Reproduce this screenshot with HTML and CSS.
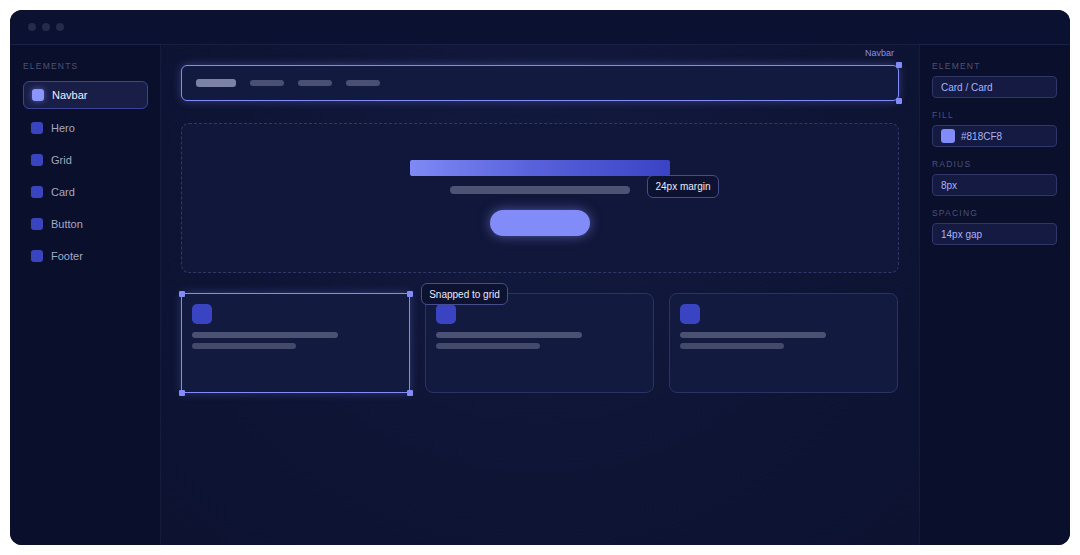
FILE: index.html
```html
<!DOCTYPE html>
<html>
<head>
<meta charset="utf-8">
<link rel="stylesheet" href="styles.css">
</head>
<body>
<div class="window">
  <div class="titlebar">
    <span class="dot"></span><span class="dot"></span><span class="dot"></span>
  </div>
  <div class="main">
    <aside class="sidebar">
      <div class="label">ELEMENTS</div>
      <ul class="layers">
        <li class="layer active"><span class="sq"></span>Navbar</li>
        <li class="layer"><span class="sq"></span>Hero</li>
        <li class="layer"><span class="sq"></span>Grid</li>
        <li class="layer"><span class="sq"></span>Card</li>
        <li class="layer"><span class="sq"></span>Button</li>
        <li class="layer"><span class="sq"></span>Footer</li>
      </ul>
    </aside>
    <section class="canvas">
      <div class="navbar">
        <span class="tag">Navbar</span>
        <span class="nb logo"></span>
        <span class="nb"></span>
        <span class="nb"></span>
        <span class="nb"></span>
        <span class="handle h-tr"></span>
        <span class="handle h-br"></span>
      </div>
      <div class="hero">
        <div class="hero-title"></div>
        <div class="hero-sub"></div>
        <div class="hero-btn"></div>
        <div class="tip tip-margin">24px margin</div>
      </div>
      <div class="cards">
        <div class="card selected">
          <div class="card-icon"></div>
          <div class="line l1"></div>
          <div class="line l2"></div>
          <span class="handle c-tl"></span>
          <span class="handle c-tr"></span>
          <span class="handle c-bl"></span>
          <span class="handle c-br"></span>
        </div>
        <div class="card">
          <div class="card-icon"></div>
          <div class="line l1"></div>
          <div class="line l2"></div>
        </div>
        <div class="card">
          <div class="card-icon"></div>
          <div class="line l1"></div>
          <div class="line l2"></div>
        </div>
        <div class="tip tip-snap">Snapped to grid</div>
      </div>
    </section>
    <aside class="props">
      <div class="field">
        <div class="label">ELEMENT</div>
        <div class="input">Card / Card</div>
      </div>
      <div class="field">
        <div class="label">FILL</div>
        <div class="input"><span class="swatch"></span>#818CF8</div>
      </div>
      <div class="field">
        <div class="label">RADIUS</div>
        <div class="input">8px</div>
      </div>
      <div class="field">
        <div class="label">SPACING</div>
        <div class="input">14px gap</div>
      </div>
    </aside>
  </div>
</div>
</body>
</html>
```

FILE: styles.css
```css
* { box-sizing: border-box; }
html, body { margin: 0; padding: 0; background: #ffffff; }
body {
  padding: 10px;
  font-family: "Liberation Sans", Arial, sans-serif;
}
.window {
  width: 1060px;
  height: 535px;
  border-radius: 12px;
  overflow: hidden;
  background: #0a0f2c;
  display: flex;
  flex-direction: column;
}
.titlebar {
  height: 35px;
  flex: none;
  border-bottom: 1px solid #1a2044;
  background: #0b1131;
  display: flex;
  align-items: center;
  gap: 6px;
  padding: 0 0 0 18px;
}
.dot {
  width: 8px;
  height: 8px;
  border-radius: 50%;
  background: #252b4a;
}
.main {
  flex: 1;
  display: flex;
  min-height: 0;
}
.sidebar {
  width: 151px;
  flex: none;
  background: #0a0f2b;
  border-right: 1px solid #151b3c;
  padding: 16px 12px 0 13px;
}
.label {
  font-size: 8.5px;
  letter-spacing: 1.2px;
  color: #4c5276;
  line-height: 10px;
}
.layers {
  list-style: none;
  margin: 10px 0 0;
  padding: 0;
  display: flex;
  flex-direction: column;
  gap: 4px;
}
.layer {
  height: 28px;
  display: flex;
  align-items: center;
  gap: 8px;
  padding-left: 7px;
  font-size: 11px;
  color: #a3a8c4;
  border: 1px solid transparent;
  border-radius: 6px;
}
.layer .sq {
  width: 12px;
  height: 12px;
  border-radius: 3px;
  background: #3a44c0;
}
.layer.active {
  background: #181e46;
  border-color: #3b4392;
  color: #eef0ff;
  margin-bottom: 1px;
  padding-left: 8px;
}
.layer.active .sq {
  background: #8b95fa;
  box-shadow: 0 0 6px rgba(129, 140, 248, 0.6);
}
.canvas {
  flex: 1;
  background: radial-gradient(ellipse at 50% 30%, #121a40 0%, #0e1434 60%, #0c1230 100%);
  padding: 20px 20px 0 20px;
  display: flex;
  flex-direction: column;
  border-right: 1px solid #151b3c;
}
.navbar {
  position: relative;
  height: 36px;
  border: 1px solid #818cf8;
  border-radius: 6px;
  background: #131a40;
  box-shadow: 0 0 10px rgba(129, 140, 248, 0.35);
  display: flex;
  align-items: center;
  padding-left: 14px;
  gap: 14px;
}
.tag {
  position: absolute;
  right: 1px;
  top: -19px;
  font-size: 9px;
  color: #8790f0;
  background: #0e1434;
  padding: 1px 3px;
}
.nb {
  width: 34px;
  height: 6px;
  border-radius: 3px;
  background: #4a5072;
}
.nb.logo {
  width: 40px;
  height: 8px;
  background: #7c82a6;
}
.handle {
  position: absolute;
  width: 6px;
  height: 6px;
  background: #818cf8;
  border-radius: 1px;
}
.h-tr { right: -4px; top: -4px; }
.h-br { right: -4px; bottom: -4px; }
.hero {
  position: relative;
  margin-top: 22px;
  height: 150px;
  border: 1px dashed #2f3869;
  border-radius: 8px;
  background: #11173a;
  display: flex;
  flex-direction: column;
  align-items: center;
  justify-content: center;
}
.hero-title {
  width: 260px;
  height: 16px;
  border-radius: 2px;
  background: linear-gradient(90deg, #7f8af6 0%, #5a63dc 45%, #3a43c4 100%);
}
.hero-sub {
  width: 180px;
  height: 8px;
  border-radius: 4px;
  background: #4d5372;
  margin-top: 10px;
}
.hero-btn {
  width: 100px;
  height: 26px;
  border-radius: 13px;
  background: #818cf8;
  margin-top: 16px;
  box-shadow: 0 0 12px rgba(129, 140, 248, 0.55);
}
.tip {
  position: absolute;
  font-size: 10px;
  color: #e8eaf8;
  background: #0d1230;
  border: 1px solid #464d8c;
  border-radius: 6px;
  white-space: nowrap;
  display: flex;
  align-items: center;
  justify-content: center;
}
.tip-margin {
  left: 465px;
  top: 51px;
  width: 72px;
  height: 23px;
}
.cards {
  position: relative;
  margin-top: 20px;
  display: grid;
  grid-template-columns: 229px 229px 229px;
  gap: 15px;
}
.card {
  position: relative;
  height: 100px;
  border: 1px solid #2a3266;
  border-radius: 8px;
  background: #131a40;
  padding: 10px;
}
.card.selected {
  border-color: #818cf8;
  border-radius: 2px;
  box-shadow: 0 0 10px rgba(129, 140, 248, 0.3);
}
.card-icon {
  width: 20px;
  height: 20px;
  border-radius: 5px;
  background: #3a44c2;
}
.line {
  height: 6px;
  border-radius: 3px;
  background: #4a5172;
}
.l1 { width: 146px; margin-top: 8px; }
.l2 { width: 104px; margin-top: 5px; background: #434a6a; }
.c-tl { left: -3px; top: -3px; }
.c-tr { right: -4px; top: -3px; }
.c-bl { left: -3px; bottom: -4px; }
.c-br { right: -4px; bottom: -4px; }
.tip-snap {
  left: 240px;
  top: -10px;
  width: 87px;
  height: 22px;
}
.props {
  width: 150px;
  flex: none;
  background: #0a0f2b;
  padding: 16px 13px 0 12px;
  display: flex;
  flex-direction: column;
  gap: 12px;
}
.field .label { margin-bottom: 5px; }
.input {
  height: 22px;
  border: 1px solid #2e3768;
  border-radius: 4px;
  background: #141a42;
  color: #a9b2f6;
  font-size: 10px;
  display: flex;
  align-items: center;
  padding-left: 8px;
  gap: 6px;
}
.swatch {
  width: 14px;
  height: 14px;
  border-radius: 3px;
  background: #818cf8;
}
```
